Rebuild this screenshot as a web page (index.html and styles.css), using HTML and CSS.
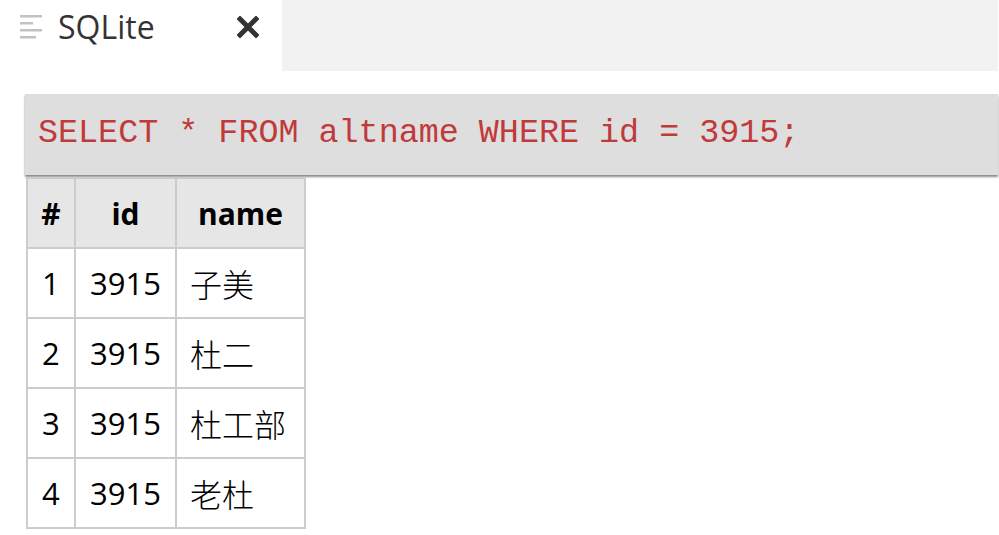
FILE: index.html
```html
<!DOCTYPE html>
<html>
<head>
<meta charset="utf-8">
<link rel="stylesheet" href="styles.css">
</head>
<body>
<div class="tabbar">
  <div class="tab">
    <svg class="menu-icon" width="24" height="24" viewBox="0 0 24 24">
      <rect x="0" y="0" width="22" height="2.5" fill="#c2c2c2"/>
      <rect x="0" y="7" width="13" height="2.5" fill="#c2c2c2"/>
      <rect x="0" y="14" width="22" height="2.5" fill="#c2c2c2"/>
      <rect x="0" y="21" width="16" height="2.5" fill="#c2c2c2"/>
    </svg>
    <span class="tab-title">SQLite</span>
    <svg class="close-icon" width="22" height="22" viewBox="0 0 22 22">
      <path d="M3 3 L19 19 M19 3 L3 19" stroke="#333" stroke-width="5" stroke-linecap="square"/>
    </svg>
  </div>
  <div class="tab-rest"></div>
</div>
<div class="content">
  <div class="query">SELECT * FROM altname WHERE id = 3915;</div>
  <table class="result">
    <thead>
      <tr><th class="c-num">#</th><th class="c-id">id</th><th class="c-name">name</th></tr>
    </thead>
    <tbody>
      <tr><td>1</td><td>3915</td><td class="cjk">子美</td></tr>
      <tr><td>2</td><td>3915</td><td class="cjk">杜二</td></tr>
      <tr><td>3</td><td>3915</td><td class="cjk">杜工部</td></tr>
      <tr><td>4</td><td>3915</td><td class="cjk">老杜</td></tr>
    </tbody>
  </table>
</div>
</body>
</html>
```
FILE: styles.css
```css
html, body {
  margin: 0;
  padding: 0;
  background: #ffffff;
}
body {
  font-family: "Open Sans", "Noto Sans CJK SC", sans-serif;
  color: #000;
}
.tabbar {
  display: flex;
  height: 71px;
}
.tab {
  width: 282px;
  background: #fff;
  display: flex;
  align-items: flex-start;
  position: relative;
}
.menu-icon {
  margin: 15px 0 0 20px;
}
.tab-title {
  font-size: 32px;
  color: #333;
  margin: 5px 0 0 14px;
  line-height: 44px;
}
.close-icon {
  position: absolute;
  left: 237px;
  top: 16px;
}
.tab-rest {
  flex: 1;
  background: #f2f2f2;
  margin-right: 1px;
}
.content {
  padding: 23px 1px 0 25px;
}
.query {
  background: #dedede;
  height: 81px;
  box-shadow: 0 2px 2px #8a8a8a;
  font-family: "Liberation Mono", "Courier New", monospace;
  font-size: 33.4px;
  color: #c03a3a;
  display: flex;
  align-items: center;
  padding-left: 13px;
  padding-bottom: 4px;
  box-sizing: border-box;
  white-space: pre;
}
.result {
  border-collapse: collapse;
  margin: 2px 0 0 1px;
  font-size: 31px;
}
.result th, .result td {
  border: 2px solid #cccccc;
  height: 70px;
  padding: 0;
  box-sizing: border-box;
}
.result th {
  background: #e6e6e6;
  font-weight: bold;
  text-align: center;
  font-size: 30px;
}
.result td {
  text-align: left;
  padding-left: 14px;
}
.result td.cjk {
  padding-left: 13px;
  font-family: "Noto Sans CJK SC", sans-serif;
  font-weight: 300;
  font-size: 32px;
}
.c-num { width: 48px; }
.c-id { width: 101px; }
.c-name { width: 129px; }
```
